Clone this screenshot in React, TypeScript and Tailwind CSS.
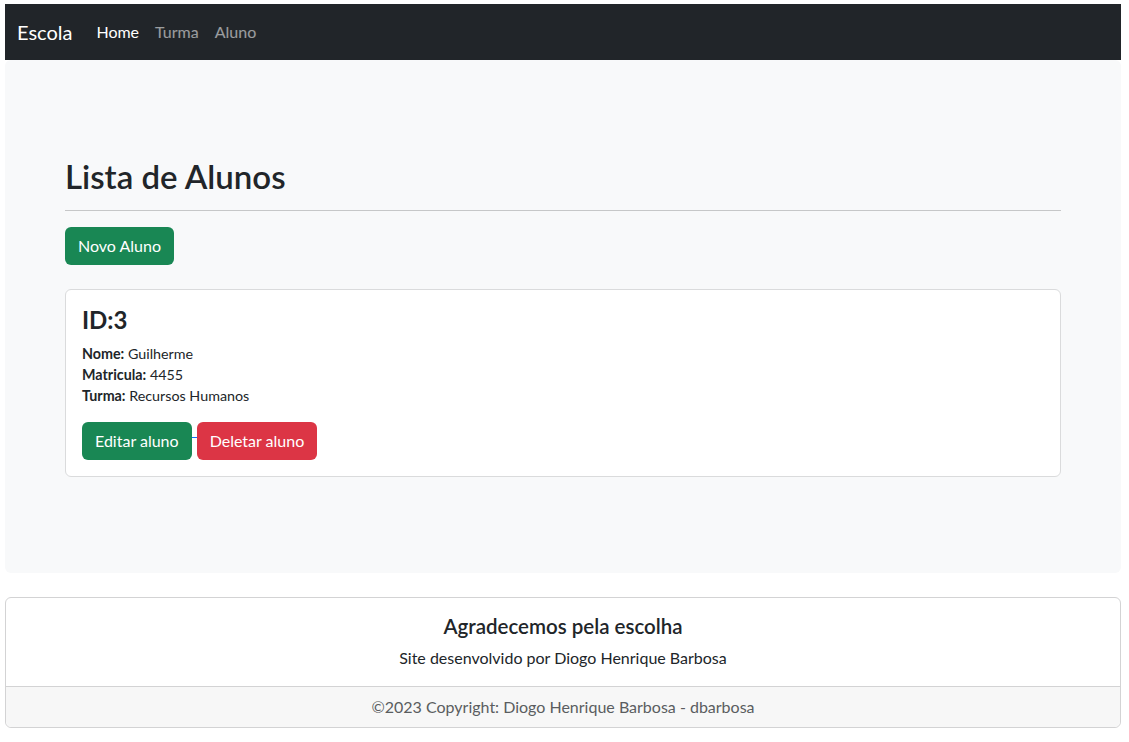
export default function App() {
  return (
    <div className="min-h-[742px] bg-white pl-[5px] pr-[8px] pt-[4px] font-['Lato',sans-serif] text-[#212529]">
      {/* Navbar */}
      <nav className="flex h-[56px] items-center bg-[#212529] px-3">
        <span className="mr-4 text-[20px] text-white">Escola</span>
        <a className="px-2 text-[16px] text-white">Home</a>
        <a className="px-2 text-[16px] text-white/55">Turma</a>
        <a className="px-2 text-[16px] text-white/55">Aluno</a>
      </nav>

      {/* Main */}
      <main className="rounded-md bg-[#f8f9fa] px-[60px] pb-[96px] pt-[96px]">
        <h1 className="text-[33px] font-semibold leading-[41px]">Lista de Alunos</h1>
        <hr className="mt-[13px] border-t border-[#c6c7c8]" />
        <button className="mt-4 h-[38px] rounded-md bg-[#198754] px-[13px] text-[16px] text-white">
          Novo Aluno
        </button>

        <div className="mt-6 rounded-md border border-[#dadbdc] bg-white p-4">
          <h3 className="text-[24px] font-bold leading-[1.2]">ID:3</h3>
          <div className="mt-2 text-[14.3px] leading-[21px]">
            <p>
              <b>Nome:</b> Guilherme
            </p>
            <p>
              <b>Matricula:</b> 4455
            </p>
            <p>
              <b>Turma:</b> Recursos Humanos
            </p>
          </div>
          <div className="mt-4 flex items-center">
            <button className="h-[38px] rounded-md bg-[#198754] px-[13px] text-[16px] text-white">
              Editar aluno
            </button>
            <span className="mt-[-6px] h-px w-[5px] bg-[#0d6efd]" />
            <button className="h-[38px] rounded-md bg-[#dc3545] px-[13px] text-[16px] text-white">
              Deletar aluno
            </button>
          </div>
        </div>
      </main>

      {/* Footer */}
      <footer className="mt-6 rounded-md border border-[#d3d3d4] text-center">
        <div className="p-4">
          <h5 className="text-[20.5px] font-semibold leading-6">Agradecemos pela escolha</h5>
          <p className="mb-4 mt-2 text-[16px] leading-6">Site desenvolvido por Diogo Henrique Barbosa</p>
        </div>
        <div className="-mt-4 rounded-b-md border-t border-[#d3d3d4] bg-[#f7f7f7] py-2 text-[16px] leading-6 text-[#5a5d60]">
          ©2023 Copyright: Diogo Henrique Barbosa - dbarbosa
        </div>
      </footer>
    </div>
  );
}
